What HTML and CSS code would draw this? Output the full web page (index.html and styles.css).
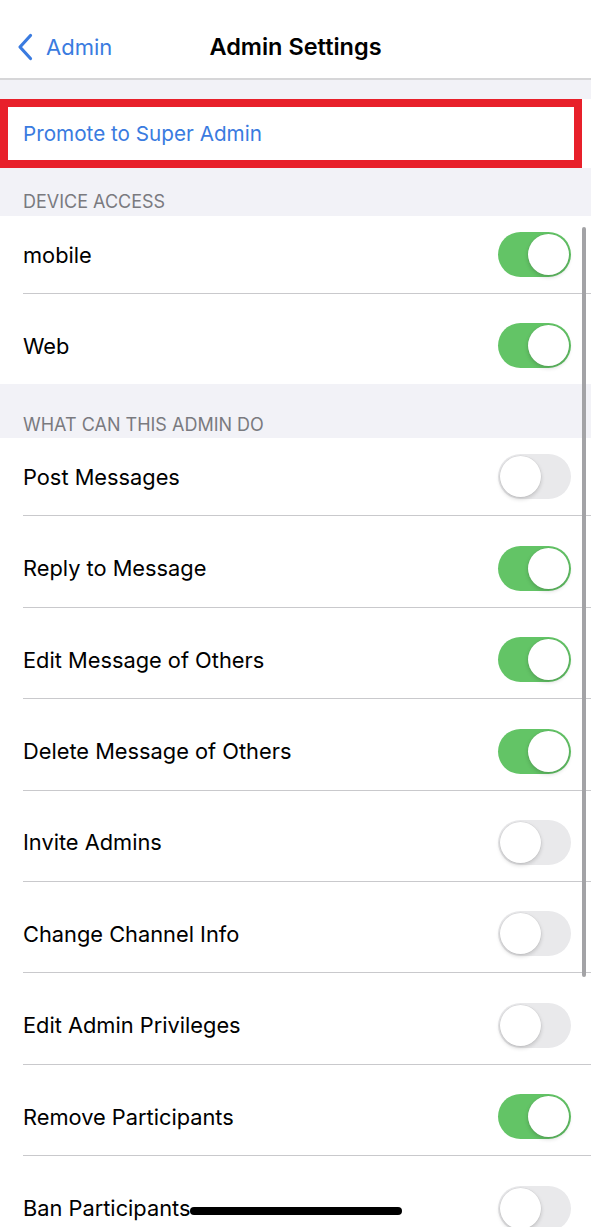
FILE: index.html
```html
<!DOCTYPE html>
<html>
<head>
<meta charset="utf-8">
<link rel="stylesheet" href="styles.css">
</head>
<body>
<div class="screen">
  <header class="nav">
    <a class="back">
      <svg class="chev" width="18" height="30" viewBox="0 0 18 30"><path d="M14.5 3.5 L4 15 L14.5 26.5" fill="none" stroke="#3a7be0" stroke-width="3.2" stroke-linecap="round" stroke-linejoin="round"/></svg>
      <span>Admin</span>
    </a>
    <div class="title">Admin Settings</div>
  </header>
  <div class="gap"></div>
  <div class="promo">
    <span class="promo-text">Promote to Super Admin</span>
    <div class="highlight"></div>
  </div>

  <div class="sec-head first">DEVICE ACCESS</div>
  <div class="group">
    <div class="row"><div class="inner"><span class="label">mobile</span><span class="toggle on"></span></div></div>
    <div class="row"><div class="inner"><span class="label">Web</span><span class="toggle on"></span></div></div>
  </div>

  <div class="sec-head second">WHAT CAN THIS ADMIN DO</div>
  <div class="group">
    <div class="row"><div class="inner"><span class="label">Post Messages</span><span class="toggle"></span></div></div>
    <div class="row"><div class="inner"><span class="label">Reply to Message</span><span class="toggle on"></span></div></div>
    <div class="row"><div class="inner"><span class="label">Edit Message of Others</span><span class="toggle on"></span></div></div>
    <div class="row"><div class="inner"><span class="label">Delete Message of Others</span><span class="toggle on"></span></div></div>
    <div class="row"><div class="inner"><span class="label">Invite Admins</span><span class="toggle"></span></div></div>
    <div class="row"><div class="inner"><span class="label">Change Channel Info</span><span class="toggle"></span></div></div>
    <div class="row"><div class="inner"><span class="label">Edit Admin Privileges</span><span class="toggle"></span></div></div>
    <div class="row"><div class="inner"><span class="label">Remove Participants</span><span class="toggle on"></span></div></div>
    <div class="row"><div class="inner"><span class="label">Ban Participants</span><span class="toggle"></span></div></div>
  </div>

  <div class="scrollbar"></div>
  <div class="home-indicator"></div>
</div>
</body>
</html>
```
FILE: styles.css
```css
* { box-sizing: border-box; }
html, body { margin: 0; padding: 0; }
body {
  background: #f2f2f7;
  font-family: Inter, "Noto Sans", "Liberation Sans", sans-serif;
  color: #000;
}
.screen {
  position: relative;
  width: 591px;
  height: 1227px;
  overflow: hidden;
  background: #f2f2f7;
}
.nav {
  position: relative;
  height: 80px;
  background: #fff;
  border-bottom: 2px solid #d6d6d8;
  display: flex;
  align-items: center;
}
.back {
  position: absolute;
  left: 16px;
  top: 32px;
  display: flex;
  align-items: center;
  gap: 12px;
  color: #3a7be0;
  font-size: 22px;
}
.chev { display: block; }
.title {
  width: 100%;
  text-align: center;
  font-size: 23.5px;
  font-weight: 600;
  padding-top: 14px;
}
.gap { height: 19px; }
.promo {
  position: relative;
  height: 69px;
  background: #fff;
  display: flex;
  align-items: center;
  padding-left: 23px;
}
.promo-text { color: #3a7be0; font-size: 20.7px; }
.highlight {
  position: absolute;
  left: 0;
  top: 0;
  width: 582px;
  height: 69px;
  border: 8px solid #e8202a;
}
.sec-head {
  color: #7a7a7f;
  font-size: 18px;
  padding-left: 23px;
  display: flex;
  align-items: flex-end;
}
.sec-head.first { height: 48px; padding-bottom: 4px; }
.sec-head.second { height: 54px; padding-bottom: 3px; }
.group { background: #fff; }
.row { padding-left: 23px; }
.inner {
  height: 77px;
  display: flex;
  align-items: center;
  justify-content: space-between;
  padding-right: 20px;
  box-sizing: content-box;
}
.row + .row .inner {
  border-top: 1px solid #c9c9cc;
  padding-top: 13.4px;
}
.label { font-size: 21.8px; }
.toggle {
  position: relative;
  width: 73px;
  height: 45px;
  border-radius: 23px;
  background: #e9e9eb;
  flex: none;
}
.toggle::after {
  content: "";
  position: absolute;
  top: 2px;
  left: 2px;
  width: 41px;
  height: 41px;
  border-radius: 50%;
  background: #fff;
  box-shadow: 0 2px 4px rgba(0,0,0,0.18), 0 0 0 0.5px rgba(0,0,0,0.06);
}
.toggle.on { background: #63c466; }
.toggle.on::after { left: 30px; }
.scrollbar {
  position: absolute;
  left: 582px;
  top: 227px;
  width: 4px;
  height: 750px;
  border-radius: 2px;
  background: #a3a3a6;
}
.home-indicator {
  position: absolute;
  left: 190px;
  top: 1207px;
  width: 212px;
  height: 8px;
  border-radius: 4px;
  background: #000;
}
```
